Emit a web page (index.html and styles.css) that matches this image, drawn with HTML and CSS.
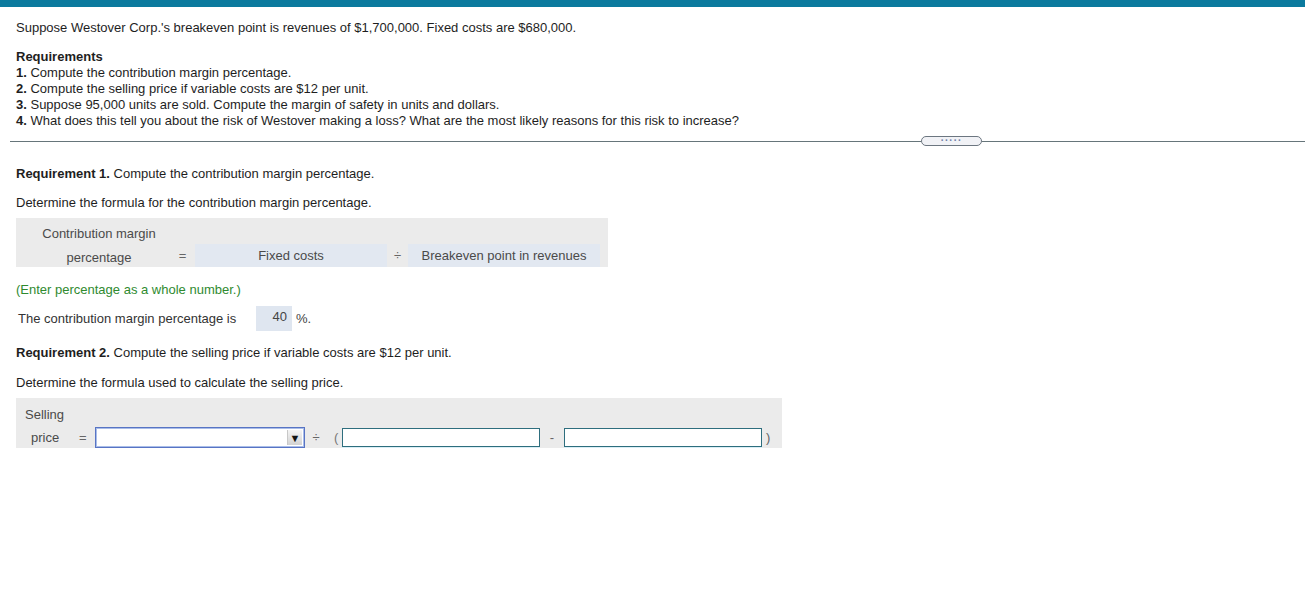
FILE: index.html
```html
<!DOCTYPE html>
<html lang="en">
<head>
    <meta charset="UTF-8">
    <title>Breakeven Analysis</title>
    <link rel="stylesheet" href="styles.css">
</head>
<body>
    <div class="topbar"></div>

    <!-- Problem statement -->
    <div class="problem">
        <p class="lead">Suppose Westover Corp.'s breakeven point is revenues of $1,700,000. Fixed costs are $680,000.</p>
        <div class="reqs">
            <div class="reqs-title">Requirements</div>
            <div><b>1.</b> Compute the contribution margin percentage.</div>
            <div><b>2.</b> Compute the selling price if variable costs are $12 per unit.</div>
            <div><b>3.</b> Suppose 95,000 units are sold. Compute the margin of safety in units and dollars.</div>
            <div><b>4.</b> What does this tell you about the risk of Westover making a loss? What are the most likely reasons for this risk to increase?</div>
        </div>
    </div>

    <div class="divider">
        <span class="line"></span>
        <button class="expand">&middot;&middot;&middot;&middot;&middot;</button>
        <span class="line line-end"></span>
    </div>

    <!-- Answer area -->
    <div class="answer">
        <p class="req-head"><b>Requirement 1.</b> Compute the contribution margin percentage.</p>
        <p class="prompt">Determine the formula for the contribution margin percentage.</p>

        <div class="formula">
            <div class="f-label">Contribution margin</div>
            <div></div><div></div><div></div><div></div>
            <div class="f-label">percentage</div>
            <div class="f-op">=</div>
            <div class="f-cell">Fixed costs</div>
            <div class="f-op">&divide;</div>
            <div class="f-cell">Breakeven point in revenues</div>
        </div>

        <p class="hint">(Enter percentage as a whole number.)</p>
        <div class="result">
            <span class="result-label">The contribution margin percentage is</span>
            <span class="answer-box">40</span>
            <span class="unit">%.</span>
        </div>

        <p class="req-head req-two"><b>Requirement 2.</b> Compute the selling price if variable costs are $12 per unit.</p>
        <p class="prompt prompt-two">Determine the formula used to calculate the selling price.</p>

        <div class="formula-wide">
            <div class="fw-title">Selling</div>
            <div class="fw-row">
                <span class="fw-label">price</span>
                <span class="fw-eq">=</span>
                <div class="select"><span class="arrow">&#9660;</span></div>
                <span class="fw-div">&divide;</span>
                <span class="fw-paren">(</span>
                <input type="text" class="field">
                <span class="fw-minus">-</span>
                <input type="text" class="field">
                <span class="fw-close">)</span>
            </div>
        </div>
    </div>
</body>
</html>
```

FILE: styles.css
```css
body {
    margin: 0;
    font-family: "Liberation Sans", Arial, sans-serif;
    font-size: 13px;
    line-height: 16px;
    color: #1e1e1e;
    background: #fff;
}

p {
    margin: 0;
}

.topbar {
    height: 7px;
    background-color: #0b7a9e;
}

/* Problem statement */
.problem {
    padding-left: 16px;
}

.lead {
    margin-top: 13px;
}

.reqs {
    margin-top: 13px;
}

.reqs-title {
    font-weight: bold;
}

/* Divider with expand pill */
.divider {
    display: flex;
    align-items: center;
    margin: 7px 0 0 10px;
    height: 10px;
}

.line {
    flex: 1;
    height: 1px;
    background-color: #66757a;
}

.line-end {
    flex: none;
    width: 323px;
}

.expand {
    width: 61px;
    height: 10px;
    padding: 0;
    border: 1px solid #6c7680;
    border-radius: 5px;
    background: #f1f2f6;
    color: #6f7ea6;
    font-size: 10px;
    line-height: 6px;
    letter-spacing: 1px;
    font-weight: bold;
    font-family: "Liberation Sans", Arial, sans-serif;
}

/* Answer area */
.answer {
    padding-left: 16px;
}

.req-head {
    margin-top: 20px;
}

.req-two {
    margin-top: 14px;
}

.prompt {
    margin-top: 13px;
}

.prompt-two {
    margin-top: 14px;
}

.formula {
    display: grid;
    grid-template-columns: 154px 25px 192px 21px 192px;
    grid-template-rows: 26px 23px;
    width: 592px;
    margin-top: 7px;
    background-color: #ebebeb;
    color: #4a4a4a;
}

.formula > div {
    display: flex;
    align-items: center;
    justify-content: center;
}

.formula > .f-label {
    padding: 5px 0 0 12px;
}

.f-cell {
    background-color: #e2e8f1;
}

.f-op {
    color: #666;
}

.hint {
    margin-top: 15px;
    color: #2f8a2f;
}

.result {
    display: flex;
    align-items: center;
    margin-top: 8px;
    height: 25px;
    padding-left: 2px;
    color: #333;
}

.result-label {
    width: 238px;
}

.answer-box {
    box-sizing: border-box;
    width: 36px;
    height: 25px;
    padding: 3px 5px 0 0;
    text-align: right;
    background-color: #dfe6f0;
    color: #444;
}

.unit {
    margin-left: 4px;
    color: #444;
}

.formula-wide {
    width: 766px;
    margin-top: 7px;
    padding-top: 9px;
    background-color: #ebebeb;
    color: #4a4a4a;
}

.fw-title {
    padding-left: 9px;
}

.fw-row {
    display: flex;
    align-items: center;
    height: 21px;
    margin-top: 4px;
    padding-left: 15px;
}

.fw-label {
    width: 48px;
}

.fw-eq {
    width: 16px;
    color: #666;
}

.select {
    box-sizing: border-box;
    display: flex;
    justify-content: flex-end;
    align-items: center;
    width: 210px;
    height: 21px;
    padding-right: 2px;
    border: 1px solid #5874c4;
    box-shadow: inset 0 0 0 1px #a9bde8;
    background: #fff;
}

.arrow {
    display: flex;
    align-items: center;
    justify-content: center;
    width: 14px;
    height: 15px;
    font-size: 11px;
    color: #111;
    background: linear-gradient(#f4f4f4, #d2d2d2);
    border-left: 1px solid #c8c8c8;
}

.fw-div {
    width: 22px;
    text-align: center;
    color: #666;
}

.fw-paren {
    width: 15px;
    padding-left: 7px;
    box-sizing: border-box;
    color: #777;
}

.field {
    box-sizing: border-box;
    width: 198px;
    height: 19px;
    margin: 0;
    border: 1px solid #2e6e7e;
    background: #fff;
    box-shadow: 0 1px 0 #d9eef5;
}

.fw-minus {
    width: 24px;
    text-align: center;
    color: #666;
}

.fw-close {
    padding-left: 4px;
    color: #666;
}
```
